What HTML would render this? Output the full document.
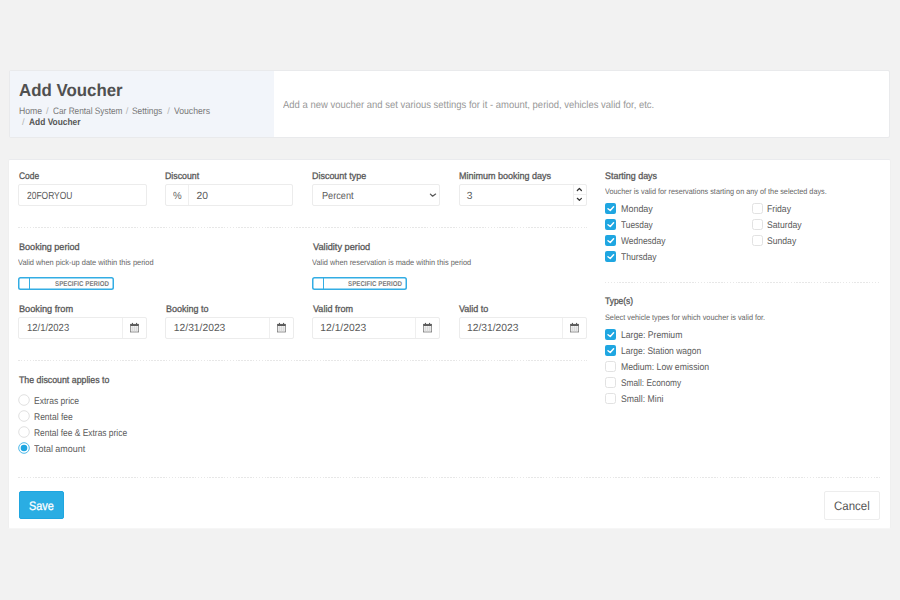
<!DOCTYPE html>
<html><head><meta charset="utf-8"><style>
html,body{margin:0;padding:0;}
body{width:900px;height:600px;background:#f2f2f2;position:relative;overflow:hidden;font-family:"Liberation Sans",sans-serif;}
.t{position:absolute;white-space:pre;line-height:normal;transform-origin:0 0;text-rendering:geometricPrecision;}
.b{position:absolute;}
</style></head><body>
<div class="b" style="left:9px;top:70px;width:881px;height:68px;background:#fff;border:1px solid #e9eaec;box-sizing:border-box;border-radius:2px;"></div>
<div class="b" style="left:10px;top:71px;width:263.5px;height:66px;background:#f2f5fa;"></div>
<div class="b" style="left:8px;top:159px;width:883px;height:370px;background:#fff;border:1px solid #efefef;border-bottom:1px solid #f6f6f6;border-top:1px solid #eaebee;box-sizing:border-box;border-radius:2px;"></div>
<div class="b" style="left:18px;top:184px;width:129px;height:22px;background:#fff;border:1px solid #ececec;box-sizing:border-box;border-radius:2px;"></div>
<div class="b" style="left:165px;top:184px;width:128px;height:22px;background:#fff;border:1px solid #ececec;box-sizing:border-box;border-radius:2px;"></div>
<div class="b" style="left:188px;top:185px;width:1px;height:20px;background:#efefef;"></div>
<div class="b" style="left:312px;top:184px;width:128px;height:22px;background:#fff;border:1px solid #ececec;box-sizing:border-box;border-radius:2px;"></div>
<div class="b" style="left:459px;top:184px;width:128px;height:22px;background:#fff;border:1px solid #ececec;box-sizing:border-box;border-radius:2px;"></div>
<div class="b" style="left:573px;top:185px;width:1px;height:20px;background:#efefef;"></div>
<div class="b" style="left:18px;top:227px;width:568.5px;height:1px;background:repeating-linear-gradient(90deg,#e7e7e7 0 1.5px,transparent 1.5px 2.9px);"></div>
<div class="b" style="left:18px;top:360px;width:568.5px;height:1px;background:repeating-linear-gradient(90deg,#e7e7e7 0 1.5px,transparent 1.5px 2.9px);"></div>
<div class="b" style="left:18px;top:477px;width:861.5px;height:1px;background:repeating-linear-gradient(90deg,#e7e7e7 0 1.5px,transparent 1.5px 2.9px);"></div>
<div class="b" style="left:605px;top:282px;width:274.5px;height:1px;background:repeating-linear-gradient(90deg,#e7e7e7 0 1.5px,transparent 1.5px 2.9px);"></div>
<div class="b" style="left:18.3px;top:277.3px;width:95.7px;height:12.399999999999977px;box-shadow:inset 0 0 0 1.5px #33ade4;border-radius:2.5px;box-sizing:border-box;"></div>
<div class="b" style="left:28.9px;top:277.5px;width:1.2000000000000028px;height:12.0px;background:#33ade4;"></div>
<div class="b" style="left:312.2px;top:277.3px;width:94.80000000000001px;height:12.399999999999977px;box-shadow:inset 0 0 0 1.5px #33ade4;border-radius:2.5px;box-sizing:border-box;"></div>
<div class="b" style="left:322.5px;top:277.5px;width:1.1999999999999886px;height:12.0px;background:#33ade4;"></div>
<div class="b" style="left:18px;top:317px;width:129px;height:22px;background:#fff;border:1px solid #ececec;box-sizing:border-box;border-radius:2px;"></div>
<div class="b" style="left:122px;top:318px;width:1px;height:20px;background:#efefef;"></div>
<svg class="b" style="left:130px;top:322px" width="10" height="11" viewBox="0 0 10 11"><rect x="0.4" y="2.3" width="8.2" height="7.7" fill="#f3f3f3" stroke="#7a7a7a" stroke-width="0.8"/><rect x="0.4" y="2.1" width="8.2" height="1.9" fill="#5a5a5a"/><path d="M2.45 4V10M4.5 4V10M6.55 4V10M0.5 6H8.5M0.5 8H8.5" stroke="#cdcdcd" stroke-width="0.5"/><rect x="1.9" y="0.9" width="1.1" height="1.8" fill="#5a5a5a"/><rect x="6.0" y="0.9" width="1.1" height="1.8" fill="#5a5a5a"/></svg>
<div class="b" style="left:165px;top:317px;width:129px;height:22px;background:#fff;border:1px solid #ececec;box-sizing:border-box;border-radius:2px;"></div>
<div class="b" style="left:269px;top:318px;width:1px;height:20px;background:#efefef;"></div>
<svg class="b" style="left:277px;top:322px" width="10" height="11" viewBox="0 0 10 11"><rect x="0.4" y="2.3" width="8.2" height="7.7" fill="#f3f3f3" stroke="#7a7a7a" stroke-width="0.8"/><rect x="0.4" y="2.1" width="8.2" height="1.9" fill="#5a5a5a"/><path d="M2.45 4V10M4.5 4V10M6.55 4V10M0.5 6H8.5M0.5 8H8.5" stroke="#cdcdcd" stroke-width="0.5"/><rect x="1.9" y="0.9" width="1.1" height="1.8" fill="#5a5a5a"/><rect x="6.0" y="0.9" width="1.1" height="1.8" fill="#5a5a5a"/></svg>
<div class="b" style="left:312px;top:317px;width:128px;height:22px;background:#fff;border:1px solid #ececec;box-sizing:border-box;border-radius:2px;"></div>
<div class="b" style="left:415px;top:318px;width:1px;height:20px;background:#efefef;"></div>
<svg class="b" style="left:423px;top:322px" width="10" height="11" viewBox="0 0 10 11"><rect x="0.4" y="2.3" width="8.2" height="7.7" fill="#f3f3f3" stroke="#7a7a7a" stroke-width="0.8"/><rect x="0.4" y="2.1" width="8.2" height="1.9" fill="#5a5a5a"/><path d="M2.45 4V10M4.5 4V10M6.55 4V10M0.5 6H8.5M0.5 8H8.5" stroke="#cdcdcd" stroke-width="0.5"/><rect x="1.9" y="0.9" width="1.1" height="1.8" fill="#5a5a5a"/><rect x="6.0" y="0.9" width="1.1" height="1.8" fill="#5a5a5a"/></svg>
<div class="b" style="left:459px;top:317px;width:128px;height:22px;background:#fff;border:1px solid #ececec;box-sizing:border-box;border-radius:2px;"></div>
<div class="b" style="left:562px;top:318px;width:1px;height:20px;background:#efefef;"></div>
<svg class="b" style="left:570px;top:322px" width="10" height="11" viewBox="0 0 10 11"><rect x="0.4" y="2.3" width="8.2" height="7.7" fill="#f3f3f3" stroke="#7a7a7a" stroke-width="0.8"/><rect x="0.4" y="2.1" width="8.2" height="1.9" fill="#5a5a5a"/><path d="M2.45 4V10M4.5 4V10M6.55 4V10M0.5 6H8.5M0.5 8H8.5" stroke="#cdcdcd" stroke-width="0.5"/><rect x="1.9" y="0.9" width="1.1" height="1.8" fill="#5a5a5a"/><rect x="6.0" y="0.9" width="1.1" height="1.8" fill="#5a5a5a"/></svg>
<div class="b" style="left:18.5px;top:491px;width:45.5px;height:28.200000000000045px;background:#2aade3;border:1px solid #1fa6e0;box-sizing:border-box;border-radius:2px;"></div>
<div class="b" style="left:824px;top:491px;width:56px;height:28.5px;background:#fff;border:1px solid #ededed;border-radius:2px;box-sizing:border-box;"></div>
<div class="b" style="left:605px;top:202.6px;width:11px;height:11.0px;background:#1fa6e1;border-radius:2px;"></div><svg class="b" style="left:605px;top:202.6px" width="11" height="11" viewBox="0 0 11 11"><path d="M3.0 5.75 L5.25 7.5 L8.6 3.7" fill="none" stroke="#fff" stroke-width="1.45" stroke-linecap="round" stroke-linejoin="round"/></svg>
<div class="b" style="left:605px;top:218.6px;width:11px;height:11.0px;background:#1fa6e1;border-radius:2px;"></div><svg class="b" style="left:605px;top:218.6px" width="11" height="11" viewBox="0 0 11 11"><path d="M3.0 5.75 L5.25 7.5 L8.6 3.7" fill="none" stroke="#fff" stroke-width="1.45" stroke-linecap="round" stroke-linejoin="round"/></svg>
<div class="b" style="left:605px;top:234.6px;width:11px;height:11.0px;background:#1fa6e1;border-radius:2px;"></div><svg class="b" style="left:605px;top:234.6px" width="11" height="11" viewBox="0 0 11 11"><path d="M3.0 5.75 L5.25 7.5 L8.6 3.7" fill="none" stroke="#fff" stroke-width="1.45" stroke-linecap="round" stroke-linejoin="round"/></svg>
<div class="b" style="left:605px;top:250.6px;width:11px;height:11.000000000000028px;background:#1fa6e1;border-radius:2px;"></div><svg class="b" style="left:605px;top:250.6px" width="11" height="11" viewBox="0 0 11 11"><path d="M3.0 5.75 L5.25 7.5 L8.6 3.7" fill="none" stroke="#fff" stroke-width="1.45" stroke-linecap="round" stroke-linejoin="round"/></svg>
<div class="b" style="left:752px;top:202.6px;width:11px;height:11.199999999999989px;background:#fff;border:1px solid #e2e2e2;border-radius:2.5px;box-sizing:border-box;"></div>
<div class="b" style="left:752px;top:218.6px;width:11px;height:11.199999999999989px;background:#fff;border:1px solid #e2e2e2;border-radius:2.5px;box-sizing:border-box;"></div>
<div class="b" style="left:752px;top:234.6px;width:11px;height:11.199999999999989px;background:#fff;border:1px solid #e2e2e2;border-radius:2.5px;box-sizing:border-box;"></div>
<div class="b" style="left:605px;top:328.59999999999997px;width:11px;height:11.0px;background:#1fa6e1;border-radius:2px;"></div><svg class="b" style="left:605px;top:328.59999999999997px" width="11" height="11" viewBox="0 0 11 11"><path d="M3.0 5.75 L5.25 7.5 L8.6 3.7" fill="none" stroke="#fff" stroke-width="1.45" stroke-linecap="round" stroke-linejoin="round"/></svg>
<div class="b" style="left:605px;top:344.59999999999997px;width:11px;height:11.0px;background:#1fa6e1;border-radius:2px;"></div><svg class="b" style="left:605px;top:344.59999999999997px" width="11" height="11" viewBox="0 0 11 11"><path d="M3.0 5.75 L5.25 7.5 L8.6 3.7" fill="none" stroke="#fff" stroke-width="1.45" stroke-linecap="round" stroke-linejoin="round"/></svg>
<div class="b" style="left:605px;top:360.59999999999997px;width:11px;height:11.199999999999989px;background:#fff;border:1px solid #e2e2e2;border-radius:2.5px;box-sizing:border-box;"></div>
<div class="b" style="left:605px;top:376.59999999999997px;width:11px;height:11.199999999999989px;background:#fff;border:1px solid #e2e2e2;border-radius:2.5px;box-sizing:border-box;"></div>
<div class="b" style="left:605px;top:392.59999999999997px;width:11px;height:11.199999999999989px;background:#fff;border:1px solid #e2e2e2;border-radius:2.5px;box-sizing:border-box;"></div>
<svg class="b" style="left:18px;top:394.1px" width="12" height="12" viewBox="0 0 12 12"><circle cx="6" cy="6" r="5.3" fill="#fff" stroke="#dcdcdc" stroke-width="0.9"/></svg>
<svg class="b" style="left:18px;top:410.1px" width="12" height="12" viewBox="0 0 12 12"><circle cx="6" cy="6" r="5.3" fill="#fff" stroke="#dcdcdc" stroke-width="0.9"/></svg>
<svg class="b" style="left:18px;top:426.1px" width="12" height="12" viewBox="0 0 12 12"><circle cx="6" cy="6" r="5.3" fill="#fff" stroke="#dcdcdc" stroke-width="0.9"/></svg>
<svg class="b" style="left:18px;top:442.1px" width="12" height="12" viewBox="0 0 12 12"><circle cx="6" cy="6" r="5.3" fill="#fff" stroke="#4db8e9" stroke-width="1"/><circle cx="6" cy="6" r="3.3" fill="#1fa6e1"/></svg>
<svg class="b" style="left:428px;top:191px" width="10" height="8" viewBox="0 0 10 8"><path d="M2.4 3.1 L4.6 5.2 L7.6 3.1" fill="none" stroke="#555" stroke-width="1.25" stroke-linecap="round" stroke-linejoin="round"/></svg>
<div class="b" style="left:573.5px;top:194.3px;width:12.5px;height:1.0px;background:#efefef;"></div>
<svg class="b" style="left:574px;top:185px" width="12" height="20" viewBox="0 0 12 20"><path d="M3.3 5.5 L5.4 3.5 L7.4 5.5 M3.3 13.3 L5.4 15.3 L7.4 13.3" fill="none" stroke="#333" stroke-width="1.2" stroke-linecap="round" stroke-linejoin="round"/></svg>
<div class="t" style="left:19.07px;top:80.10px;font-size:17.4px;font-weight:bold;color:#505050;transform:scaleX(0.9696);">Add Voucher</div>
<div class="t" style="left:19.10px;top:104.70px;font-size:9.4px;color:#777;transform:scaleX(0.9248);">Home</div>
<div class="t" style="left:46.05px;top:104.70px;font-size:9.4px;color:#b5b5b5;">/</div>
<div class="t" style="left:53.30px;top:104.70px;font-size:9.4px;color:#777;transform:scaleX(0.8825);">Car Rental System</div>
<div class="t" style="left:125.85px;top:104.70px;font-size:9.4px;color:#b5b5b5;">/</div>
<div class="t" style="left:132.28px;top:104.70px;font-size:9.4px;color:#777;transform:scaleX(0.8939);">Settings</div>
<div class="t" style="left:167.25px;top:104.70px;font-size:9.4px;color:#b5b5b5;">/</div>
<div class="t" style="left:174.15px;top:104.70px;font-size:9.4px;color:#777;transform:scaleX(0.9200);">Vouchers</div>
<div class="t" style="left:21.91px;top:116.30px;font-size:9.4px;color:#b5b5b5;">/</div>
<div class="t" style="left:28.66px;top:116.30px;font-size:9.4px;font-weight:bold;color:#555;transform:scaleX(0.8943);">Add Voucher</div>
<div class="t" style="left:283.00px;top:100.30px;font-size:10.3px;color:#979797;transform:scaleX(0.9200);">Add a new voucher and set various settings for it - amount, period, vehicles valid for, etc.</div>
<div class="t" style="left:18.51px;top:171.10px;font-size:9.5px;-webkit-text-stroke:0.3px #585858;color:#585858;transform:scaleX(0.8905);">Code</div>
<div class="t" style="left:165.47px;top:171.10px;font-size:9.5px;-webkit-text-stroke:0.3px #585858;color:#585858;transform:scaleX(0.9233);">Discount</div>
<div class="t" style="left:312.35px;top:171.10px;font-size:9.5px;-webkit-text-stroke:0.3px #585858;color:#585858;transform:scaleX(0.9412);">Discount type</div>
<div class="t" style="left:459.12px;top:171.10px;font-size:9.5px;-webkit-text-stroke:0.3px #585858;color:#585858;transform:scaleX(0.9475);">Minimum booking days</div>
<div class="t" style="left:26.53px;top:190.90px;font-size:10.3px;color:#5a5a5a;transform:scaleX(0.8216);">20FORYOU</div>
<div class="t" style="left:172.62px;top:190.90px;font-size:10.3px;color:#666;transform:scaleX(0.9483);">%</div>
<div class="t" style="left:196.44px;top:190.90px;font-size:10.3px;color:#5a5a5a;">20</div>
<div class="t" style="left:322.11px;top:190.90px;font-size:10.3px;color:#5a5a5a;transform:scaleX(0.8908);">Percent</div>
<div class="t" style="left:466.83px;top:190.90px;font-size:10.3px;color:#5a5a5a;">3</div>
<div class="t" style="left:18.91px;top:241.70px;font-size:9.5px;-webkit-text-stroke:0.3px #585858;color:#585858;transform:scaleX(0.9550);">Booking period</div>
<div class="t" style="left:18.40px;top:257.60px;font-size:7.9px;color:#666;transform:scaleX(0.9400);">Valid when pick-up date within this period</div>
<div class="t" style="left:312.51px;top:241.70px;font-size:9.5px;-webkit-text-stroke:0.3px #585858;color:#585858;transform:scaleX(0.9699);">Validity period</div>
<div class="t" style="left:312.20px;top:257.60px;font-size:7.9px;color:#666;transform:scaleX(0.9363);">Valid when reservation is made within this period</div>
<div class="t" style="left:54.65px;top:280.90px;font-size:7px;font-weight:bold;color:#7c7c7c;transform:scaleX(0.8839);">SPECIFIC PERIOD</div>
<div class="t" style="left:347.97px;top:280.90px;font-size:7px;font-weight:bold;color:#7c7c7c;transform:scaleX(0.8839);">SPECIFIC PERIOD</div>
<div class="t" style="left:18.90px;top:303.80px;font-size:9.5px;-webkit-text-stroke:0.3px #585858;color:#585858;transform:scaleX(0.9656);">Booking from</div>
<div class="t" style="left:165.91px;top:303.80px;font-size:9.5px;-webkit-text-stroke:0.3px #585858;color:#585858;transform:scaleX(0.9437);">Booking to</div>
<div class="t" style="left:312.51px;top:303.80px;font-size:9.5px;-webkit-text-stroke:0.3px #585858;color:#585858;transform:scaleX(0.9515);">Valid from</div>
<div class="t" style="left:459.29px;top:303.80px;font-size:9.5px;-webkit-text-stroke:0.3px #585858;color:#585858;transform:scaleX(0.9464);">Valid to</div>
<div class="t" style="left:26.68px;top:323.30px;font-size:10.3px;color:#5a5a5a;transform:scaleX(0.9203);">12/1/2023</div>
<div class="t" style="left:173.82px;top:323.30px;font-size:10.3px;color:#5a5a5a;">12/31/2023</div>
<div class="t" style="left:320.33px;top:323.30px;font-size:10.3px;color:#5a5a5a;">12/1/2023</div>
<div class="t" style="left:466.98px;top:323.30px;font-size:10.3px;color:#5a5a5a;">12/31/2023</div>
<div class="t" style="left:18.99px;top:375.10px;font-size:9.5px;-webkit-text-stroke:0.3px #585858;color:#585858;transform:scaleX(0.9250);">The discount applies to</div>
<div class="t" style="left:33.76px;top:396.10px;font-size:9.7px;color:#5a5a5a;transform:scaleX(0.8823);">Extras price</div>
<div class="t" style="left:33.75px;top:412.10px;font-size:9.7px;color:#5a5a5a;transform:scaleX(0.8766);">Rental fee</div>
<div class="t" style="left:33.75px;top:428.10px;font-size:9.7px;color:#5a5a5a;transform:scaleX(0.8689);">Rental fee &amp; Extras price</div>
<div class="t" style="left:33.55px;top:444.10px;font-size:9.7px;color:#5a5a5a;transform:scaleX(0.9217);">Total amount</div>
<div class="t" style="left:28.53px;top:499.00px;font-size:12.3px;-webkit-text-stroke:0.3px #fff;color:#fff;transform:scaleX(0.8835);">Save</div>
<div class="t" style="left:833.72px;top:499.10px;font-size:12.3px;color:#555;transform:scaleX(0.9330);">Cancel</div>
<div class="t" style="left:605.46px;top:170.90px;font-size:9.5px;-webkit-text-stroke:0.3px #585858;color:#585858;transform:scaleX(0.9385);">Starting days</div>
<div class="t" style="left:605.20px;top:186.90px;font-size:7.9px;color:#666;transform:scaleX(0.9227);">Voucher is valid for reservations starting on any of the selected days.</div>
<div class="t" style="left:620.83px;top:204.30px;font-size:9.7px;color:#5a5a5a;transform:scaleX(0.9222);">Monday</div>
<div class="t" style="left:620.83px;top:220.30px;font-size:9.7px;color:#5a5a5a;transform:scaleX(0.8625);">Tuesday</div>
<div class="t" style="left:621.43px;top:236.30px;font-size:9.7px;color:#5a5a5a;transform:scaleX(0.8705);">Wednesday</div>
<div class="t" style="left:621.49px;top:252.30px;font-size:9.7px;color:#5a5a5a;transform:scaleX(0.8828);">Thursday</div>
<div class="t" style="left:767.31px;top:204.30px;font-size:9.7px;color:#5a5a5a;transform:scaleX(0.8911);">Friday</div>
<div class="t" style="left:767.27px;top:220.30px;font-size:9.7px;color:#5a5a5a;transform:scaleX(0.8929);">Saturday</div>
<div class="t" style="left:767.27px;top:236.30px;font-size:9.7px;color:#5a5a5a;transform:scaleX(0.8885);">Sunday</div>
<div class="t" style="left:605.43px;top:296.40px;font-size:9.5px;-webkit-text-stroke:0.3px #585858;color:#585858;transform:scaleX(0.8865);">Type(s)</div>
<div class="t" style="left:605.23px;top:312.80px;font-size:7.9px;color:#666;transform:scaleX(0.9244);">Select vehicle types for which voucher is valid for.</div>
<div class="t" style="left:620.86px;top:330.30px;font-size:9.7px;color:#5a5a5a;transform:scaleX(0.8902);">Large: Premium</div>
<div class="t" style="left:620.88px;top:346.30px;font-size:9.7px;color:#5a5a5a;transform:scaleX(0.8757);">Large: Station wagon</div>
<div class="t" style="left:620.86px;top:362.30px;font-size:9.7px;color:#5a5a5a;transform:scaleX(0.8933);">Medium: Low emission</div>
<div class="t" style="left:620.84px;top:378.30px;font-size:9.7px;color:#5a5a5a;transform:scaleX(0.8586);">Small: Economy</div>
<div class="t" style="left:620.83px;top:394.30px;font-size:9.7px;color:#5a5a5a;transform:scaleX(0.8946);">Small: Mini</div>
</body></html>
